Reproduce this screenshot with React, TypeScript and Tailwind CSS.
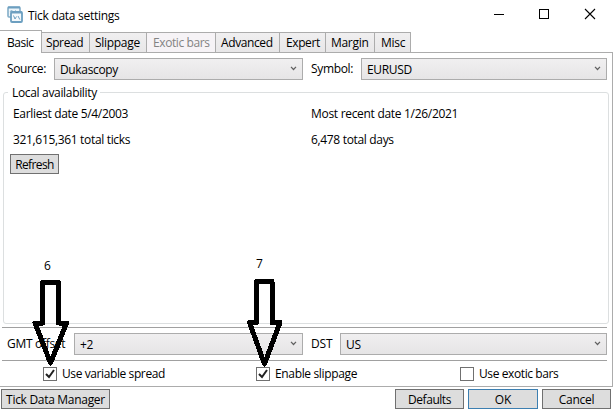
import { useState } from "react";
import clsx from "clsx";

type TabType = {
  label: string;
  className: string;
  disabled?: boolean;
};

const tabs: TabType[] = [
  { label: "Spread", className: "w-[49px] pl-[4px] tracking-[-0.4px]" },
  { label: "Slippage", className: "w-[57px] pl-[5px] tracking-[-0.3px]" },
  { label: "Exotic bars", className: "w-[69px] pl-[6px] tracking-[-0.4px]", disabled: true },
  { label: "Advanced", className: "w-[64px] pl-[5px] tracking-[-0.4px]" },
  { label: "Expert", className: "w-[46px] pl-[6px] tracking-[-0.4px]" },
  { label: "Margin", className: "w-[49px] pl-[5px] tracking-[-0.3px]" },
  { label: "Misc", className: "w-[36px] pl-[6px] tracking-[-0.3px]" },
];

function AppIcon() {
  return (
    <svg width="16" height="17" viewBox="0 0 16 17" fill="none">
      <rect x="1" y="1" width="12" height="10" rx="1" fill="#edf5fa" stroke="#82adc8" strokeWidth="1.6" />
      <path d="M1 1.500h12" stroke="#6c9fc0" strokeWidth="2" />
      <path d="M3 6l1.500-2L6 6M8 4.500l1.500 1" stroke="#8fb8d0" />
      <rect x="4" y="6" width="11" height="10" rx="1" fill="#f4f9fc" stroke="#6c9fc0" strokeWidth="1.8" />
      <path d="M4 6.500h11" stroke="#6c9fc0" strokeWidth="2" />
      <path d="M6.500 9.500L8 13l1.500-2.500M11 10l1.800 3.500" stroke="#6c9fc0" />
    </svg>
  );
}

function TitleBar() {
  return (
    <header className="flex h-[30px] items-start">
      <div className="ml-[7px] mt-[6px]">
        <AppIcon />
      </div>
      <h1 className="ml-[5px] mt-[7px] w-[482px] leading-[17px] tracking-[-0.28px]">
        Tick data settings
      </h1>
      <svg width="103" height="12" viewBox="0 0 103 12" className="-ml-[16px] mt-[8px]" fill="none" stroke="#000" shapeRendering="crispEdges">
        <path d="M0 6.5h10" />
        <rect x="45.5" y="1.5" width="9" height="9" />
        <path d="M91 1l10 10M101 1L91 11" shapeRendering="auto" strokeWidth="1.1" />
      </svg>
    </header>
  );
}

function TabBar() {
  return (
    <nav className="relative z-10 -mb-px flex h-[23px] items-end">
      <div className="h-[23px] w-[42px] border-r border-t border-[#acacac] bg-white pl-[7px] leading-[23px] tracking-[-0.5px]">
        Basic
      </div>
      {tabs.map(({ label, className, disabled }, index) => (
        <div
          key={label}
          className={clsx(
            "h-[21px] border-y border-r border-[#acacac] leading-[19px] whitespace-nowrap",
            disabled ? "bg-[#f6f3f6] text-[#838383]" : "bg-linear-to-b from-[#f0eff0] to-[#e8e7e8]",
            index === 0 && "-ml-px border-l",
            className
          )}
        >
          {label}
        </div>
      ))}
    </nav>
  );
}

function Combo({ value, className }: { value: string; className: string }) {
  return (
    <div
      className={clsx(
        "flex h-[22px] items-center justify-between border border-[#acacac] bg-linear-to-b from-[#f0eff0] to-[#e6e5e6] pl-[5px] pr-[5px] tracking-[-0.35px]",
        className
      )}
    >
      <span className="mt-px">{value}</span>
      <svg width="7" height="5" viewBox="0 0 7 5" fill="none" stroke="#606060" strokeWidth="1.2" className="-mt-[2px]">
        <path d="M1 .8l2.5 2.7L6 .8" />
      </svg>
    </div>
  );
}

function PushButton({ label, className }: { label: string; className: string }) {
  return (
    <button
      type="button"
      className={clsx(
        "flex h-[20px] items-center justify-center border bg-[#dddddd] pt-px whitespace-nowrap",
        className
      )}
    >
      {label}
    </button>
  );
}

type CheckProps = {
  label: string;
  initial: boolean;
  className: string;
};

function Check({ label, initial, className }: CheckProps) {
  const [checked, setChecked] = useState(initial);

  return (
    <label className={clsx("flex items-center", className)}>
      <input type="checkbox" className="sr-only" checked={checked} onChange={() => setChecked(!checked)} />
      <span className="mr-[5px] flex size-[14px] items-center justify-center border border-[#707070] bg-white">
        {checked && (
          <svg width="12" height="12" viewBox="0 0 12 12" fill="none" stroke="#212121" strokeWidth="2">
            <path d="M2 6l3 3 5-7" />
          </svg>
        )}
      </span>
      <span>{label}</span>
    </label>
  );
}

type ArrowProps = {
  number: string;
  path: string;
  className: string;
  numberClass: string;
};

function Arrow({ number, path, className, numberClass }: ArrowProps) {
  return (
    <div className={clsx("pointer-events-none absolute z-20 w-[38px]", className)}>
      <span className={clsx("block leading-[17px]", numberClass)}>{number}</span>
      <svg
        width="38"
        height="90"
        viewBox="0 0 38 90"
        fill="none"
        stroke="#000"
        strokeWidth="5"
        strokeLinejoin="round"
        shapeRendering="crispEdges"
      >
        <path d={path} />
      </svg>
    </div>
  );
}

export default function App() {
  return (
    <div className="relative h-[411px] w-[613px] overflow-hidden bg-white font-['Open_Sans',sans-serif] text-[12px] leading-[16px] text-black">
      <TitleBar />
      <TabBar />
      <main className="flex h-[335px] flex-col border-y border-r border-[#acacac] pt-[5px]">
        <div className="flex h-[22px] items-center">
          <span className="w-[54px] pl-[7px] tracking-[-0.4px]">Source:</span>
          <Combo value="Dukascopy" className="w-[249px]" />
          <span className="w-[58px] pl-[8px] tracking-[-0.35px]">Symbol:</span>
          <Combo value="EURUSD" className="w-[246px]" />
        </div>

        <section className="ml-[3px] mt-[12px] h-[232px] w-[606px] rounded-[3px] border border-[#dcdfe0] tracking-[-0.33px]">
          <h2 className="-mt-[8px] ml-[4px] w-[92px] bg-white pl-[4px] whitespace-nowrap">Local availability</h2>
          <div className="mt-[5px] grid grid-cols-[298px_1fr] gap-y-[10px] pl-[9px]">
            <span>Earliest date 5/4/2003</span>
            <span className="tracking-[-0.3px]">Most recent date 1/26/2021</span>
            <span>321,615,361 total ticks</span>
            <span>6,478 total days</span>
          </div>
          <PushButton label="Refresh" className="ml-[6px] mt-[6px] w-[49px] border-[#707070] tracking-[-0.6px]" />
        </section>

        <div className="ml-[2px] mt-[3px] flex h-[34px] w-[605px] items-center border-y border-[#a0a0a0]">
          <span className="w-[72px] pl-[5px] tracking-[-0.3px]">GMT offset</span>
          <Combo value="+2" className="w-[229px]" />
          <span className="w-[37px] pl-[8px] tracking-[-0.2px]">DST</span>
          <Combo value="US" className="w-[267px]" />
        </div>

        <div className="mt-[6px] flex h-[14px]">
          <Check label="Use variable spread" initial className="ml-[43px] w-[213px] tracking-[-0.4px]" />
          <Check label="Enable slippage" initial className="w-[204px] tracking-[-0.35px]" />
          <Check label="Use exotic bars" initial={false} className="tracking-[-0.4px]" />
        </div>
      </main>

      <footer className="mt-[2px] flex pl-px">
        <PushButton label="Tick Data Manager" className="w-[109px] border-[#707070] tracking-[-0.3px]" />
        <PushButton label="Defaults" className="ml-[285px] w-[69px] border-[#707070] tracking-[-0.45px]" />
        <PushButton label="OK" className="ml-[4px] w-[70px] border-[#3c7fb1] tracking-[-0.2px]" />
        <PushButton label="Cancel" className="ml-[4px] w-[69px] border-[#707070] tracking-[-0.3px]" />
      </footer>

      <Arrow
        number="6"
        path="M10.500 3.500h16v40.500h8L18.500 84L3 44h7.500z"
        className="left-[32px] top-[257px]"
        numberClass="mb-[5px] pl-[12px]"
      />
      <Arrow
        number="7"
        path="M10.500 3.500h15.500v41h8L18.500 86L3.500 44.500h7z"
        className="left-[246px] top-[255px]"
        numberClass="mb-[6px] pl-[10px]"
      />
    </div>
  );
}
